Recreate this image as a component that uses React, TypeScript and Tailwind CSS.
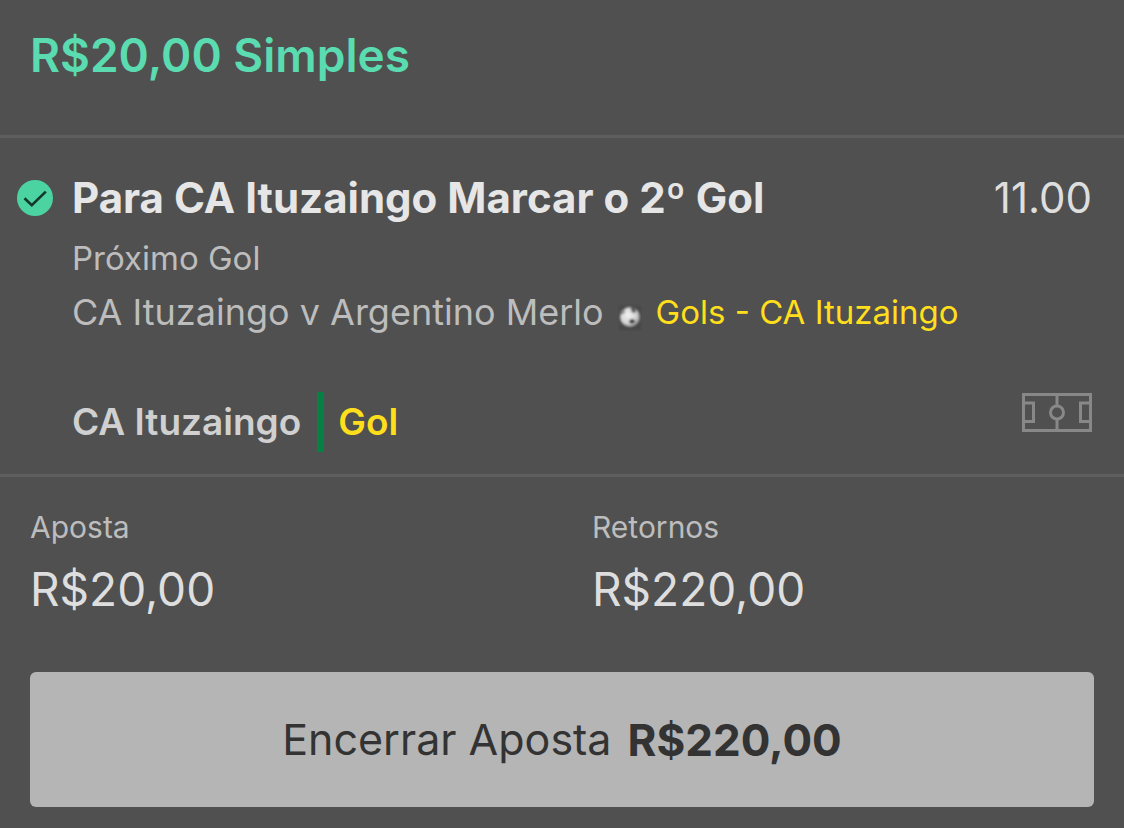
import React from "react";

function CheckBadge() {
  return (
    <svg viewBox="0 0 36 36" className="h-9 w-9 shrink-0" role="img" aria-label="Ganhou">
      <circle cx="18" cy="18" r="18" fill="#4bd3a2" />
      <path d="M7.5 18.2 L14.8 25.2 L28.8 11.6" fill="none" stroke="#16382c" strokeWidth="2.6" />
    </svg>
  );
}

function Ball() {
  return (
    <svg viewBox="0 0 24 28" className="mt-2.5 h-7 w-6 shrink-0" aria-hidden="true">
      <defs>
        <radialGradient id="ball" cx="0.4" cy="0.4" r="0.65">
          <stop offset="0" stopColor="#f2f2f2" />
          <stop offset="0.65" stopColor="#d2d2d2" />
          <stop offset="1" stopColor="#858585" />
        </radialGradient>
        <filter id="soft" x="-20%" y="-20%" width="140%" height="140%">
          <feGaussianBlur stdDeviation="0.8" />
        </filter>
      </defs>
      <rect x="1" y="3" width="22" height="24" fill="#464646" filter="url(#soft)" />
      <g filter="url(#soft)">
        <circle cx="12" cy="14" r="10" fill="url(#ball)" />
        <path d="M12 3.5 L18 5 L17.5 10 L14 9.5 Z" fill="#5a5a5a" />
        <path d="M11.5 17 L15 16 L17.5 18.5 L14.5 20.5 L11.5 20 Z" fill="#222" />
        <path d="M3 7 L7 7 L6.5 10.5 L3 11.5 Z" fill="#8a8a8a" />
      </g>
    </svg>
  );
}

function Pitch() {
  return (
    <svg viewBox="0 0 70 40" className="h-10 w-[70px]" fill="none" stroke="#888888" strokeWidth="3" aria-hidden="true">
      <rect x="1.5" y="2.5" width="67" height="36" />
      <path d="M2 11 H11.5 V29.5 H2" />
      <path d="M68 11 H58.5 V29.5 H68" />
      <path d="M35 3 V14 M35 27 V38" />
      <circle cx="35" cy="20.5" r="6.5" />
    </svg>
  );
}

function Amount({ label, value }: { label: string; value: string }) {
  return (
    <div className="pl-[30px]">
      <dt className="text-[30px] leading-10 text-[#bdbdbd]">{label}</dt>
      <dd className="mt-[14px] text-[46px] leading-[56px] text-[#dedede]">{value}</dd>
    </div>
  );
}

export default function App() {
  return (
    <main className="min-h-screen bg-[#505050] font-['Inter','Liberation_Sans',sans-serif] text-[#bdbdbd]">
      <header className="border-b-3 border-[#5e5e5e] px-[30px] pt-[27px] pb-[52px]">
        <h1 className="text-[46px] leading-[56px] font-semibold text-[#5adbb0]">R$20,00 Simples</h1>
      </header>

      <section className="flex gap-[19px] border-b-3 border-[#5e5e5e] pt-8 pr-8 pb-[22px] pl-[17px]">
        <div className="flex h-14 items-center">
          <CheckBadge />
        </div>
        <div className="min-w-0 flex-1">
          <div className="flex items-start justify-between gap-4">
            <h2 className="text-[42px] leading-[56px] font-bold text-[#e6e6e6]">Para CA Ituzaingo Marcar o 2º Gol</h2>
            <span className="text-[42px] leading-[56px] text-[#dedede]">11.00</span>
          </div>
          <p className="mt-1 text-[33px] leading-[56px]">Próximo Gol</p>
          <div className="flex flex-wrap items-center text-[36px] leading-[52px]">
            <span>CA Ituzaingo v Argentino Merlo</span>
            <span className="ml-[14px] flex items-center gap-[14px] text-[33px] text-[#ffdf1b]">
              <Ball />
              Gols - CA Ituzaingo
            </span>
          </div>
          <div className="mt-[54px] flex items-start justify-between">
            <div className="flex h-[60px] items-center text-[37px] font-semibold">
              <span className="text-[#d0d0d0]">CA Ituzaingo</span>
              <span className="mr-[14px] ml-4 h-full w-[7px] bg-[#058144]" />
              <span className="text-[#ffdf1b]">Gol</span>
            </div>
            <Pitch />
          </div>
        </div>
      </section>

      <section className="pt-[30px] pb-[21px]">
        <dl className="grid grid-cols-2">
          <Amount label="Aposta" value="R$20,00" />
          <Amount label="Retornos" value="R$220,00" />
        </dl>
        <div className="mt-[55px] px-[30px]">
          <button
            type="button"
            className="flex h-[135px] w-full items-center justify-center gap-4 rounded-md bg-[#b5b5b5] text-[#333333]"
          >
            <span className="text-[43px]">Encerrar Aposta</span>
            <span className="text-[44px] font-bold">R$220,00</span>
          </button>
        </div>
      </section>
    </main>
  );
}
